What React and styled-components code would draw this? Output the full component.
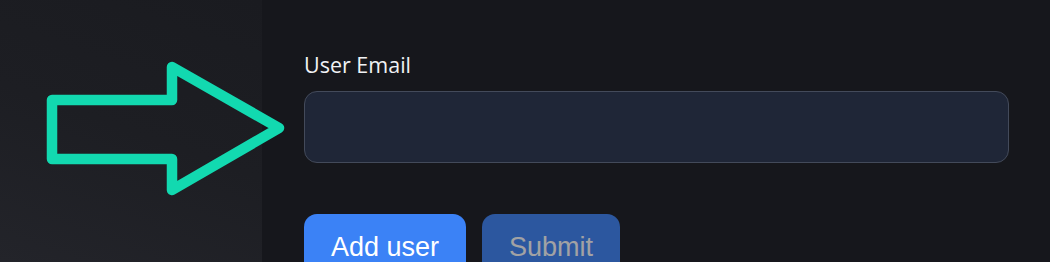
import React from 'react'
import styled, { createGlobalStyle } from 'styled-components'

const GlobalStyle = createGlobalStyle`
	html, body {
		margin: 0;
		padding: 0;
		background: #16171c;
	}
	* {
		box-sizing: border-box;
	}
`

const Page = styled.div`
	position: relative;
	display: flex;
	width: 1050px;
	height: 262px;
	overflow: hidden;
	background: #16171c;
`

const Sidebar = styled.aside`
	flex: 0 0 262px;
	background: linear-gradient(20deg, #23242a 0%, #1d1e23 50%, #1a1b20 100%);
`

const Main = styled.main`
	flex: 1;
	padding: 49px 41px 0 42px;
`

const Label = styled.label`
	display: block;
	margin-bottom: 11px;
	font-family: 'Open Sans', 'Noto Sans', sans-serif;
	font-size: 21.5px;
	font-weight: 500;
	line-height: 31px;
	color: #f0f2f5;
`

const Input = styled.input`
	display: block;
	width: 100%;
	height: 72px;
	padding: 0 18px;
	background: #1f2637;
	border: 1px solid #434a5a;
	border-radius: 13px;
	outline: none;
	color: #e5e7eb;
	font-family: 'Open Sans', sans-serif;
	font-size: 21px;
`

const Actions = styled.div`
	display: flex;
	gap: 16px;
	margin-top: 51px;
`

const Button = styled.button`
	padding: 18px 27px;
	border: none;
	border-radius: 13px;
	background: #3b82f6;
	color: #ffffff;
	font-family: 'Liberation Sans', Arial, sans-serif;
	font-size: 27px;
	line-height: normal;
	opacity: ${p => (p.disabled ? 0.6 : 1)};
	cursor: pointer;
`

const Pointer = styled.svg`
	position: absolute;
	left: 0;
	top: 0;
	pointer-events: none;
`

export default function App() {
	return (
		<>
			<GlobalStyle />
			<Page>
				<Sidebar />
				<Main>
					<Label htmlFor='email'>User Email</Label>
					<Input id='email' type='email' />
					<Actions>
						<Button>Add user</Button>
						<Button disabled>Submit</Button>
					</Actions>
				</Main>
				<Pointer width='300' height='262' viewBox='0 0 300 262'>
					<polygon
						points='52,100 172,100 172,67 279,128 172,190 172,159 52,159'
						fill='none'
						stroke='#12d9b0'
						strokeWidth='10.5'
						strokeLinejoin='round'
					/>
				</Pointer>
			</Page>
		</>
	)
}
